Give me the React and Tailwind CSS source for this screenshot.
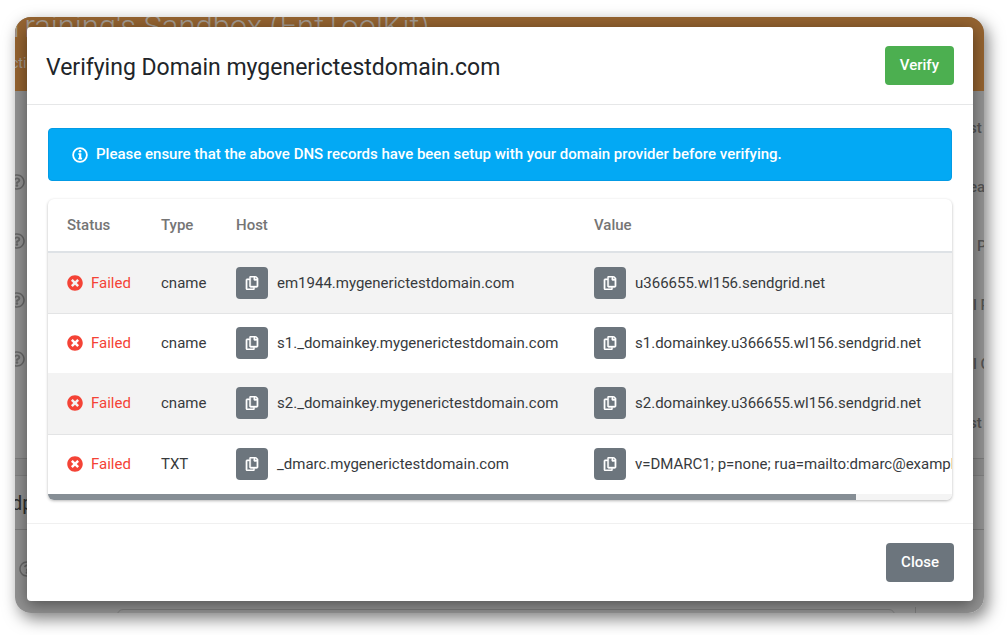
import { useEffect, useRef, useState } from 'react'
import { FaRegCopy, FaRegQuestionCircle, FaTimesCircle } from 'react-icons/fa'

const records = [
  { type: 'cname', host: 'em1944.mygenerictestdomain.com', value: 'u366655.wl156.sendgrid.net' },
  { type: 'cname', host: 's1._domainkey.mygenerictestdomain.com', value: 's1.domainkey.u366655.wl156.sendgrid.net' },
  { type: 'cname', host: 's2._domainkey.mygenerictestdomain.com', value: 's2.domainkey.u366655.wl156.sendgrid.net' },
  { type: 'TXT', host: '_dmarc.mygenerictestdomain.com', value: 'v=DMARC1; p=none; rua=mailto:dmarc@example.com' },
]

const settings = [
  { label: 'st', help: false },
  { label: 'eat', help: true },
  { label: 'P', help: true, indent: 'pl-2' },
  { label: 'l R', help: true, indent: 'pl-1' },
  { label: 'l C', help: true, indent: 'pl-1' },
  { label: 'st', help: false },
]

const InfoIcon = () => (
  <svg viewBox="0 0 512 512" className="w-4 h-4 shrink-0" fill="currentColor" aria-hidden="true">
    <circle cx="256" cy="256" r="220" fill="none" stroke="currentColor" strokeWidth="58" />
    <path d="M212 346h14V250h-14c-6 0-12-5-12-12v-30c0-7 6-12 12-12h74c7 0 12 5 12 12v138h14c7 0 12 5 12 12v28c0 7-5 12-12 12h-100c-6 0-12-5-12-12v-28c0-7 6-12 12-12z" />
    <circle cx="258" cy="136" r="40" />
  </svg>
)

const CopyCell = ({ text }) => (
  <div className="flex items-center gap-[9px]">
    <button
      type="button"
      aria-label={`Copy ${text}`}
      onClick={() => navigator.clipboard?.writeText(text)}
      className="flex w-8 h-8 shrink-0 items-center justify-center rounded bg-[#6c757d] text-white hover:bg-[#5a6268]"
    >
      <FaRegCopy className="w-[14px] h-[14px] stroke-current stroke-[16px]" />
    </button>
    <span>{text}</span>
  </div>
)

// Dimmed settings page behind the dialog
const PageBehind = () => (
  <div className="absolute inset-0 flex flex-col bg-[#929292]" aria-hidden="true">
    <div className="h-[74px] shrink-0 bg-[#946330] text-[#a39a90]">
      <p className="-mt-2 -ml-2 text-[31px] leading-9 font-light whitespace-nowrap">Training's Sandbox (EntToolKit)</p>
      <p className="mt-2 -ml-1 text-sm">cti</p>
    </div>
    <div className="h-[368px] shrink-0 border-b border-[#7c7c7c] pt-2">
      {settings.map((row, i) => (
        <div key={i} className="flex h-[59px] items-center justify-between text-[#545454]">
          <span className="-ml-[6px] pb-3">
            {row.help && <FaRegQuestionCircle className="w-4 h-4 text-[#666666]" />}
          </span>
          <span className={`w-[15px] text-[15px] font-medium whitespace-nowrap ${row.indent || ''}`}>
            {row.label}
          </span>
        </div>
      ))}
    </div>
    <div className="h-[17px] shrink-0 border-b border-[#808080] bg-[#8c8c8c]" />
    <div className="flex h-[54px] shrink-0 items-center border-b border-[#7c7c7c]">
      <span className="-ml-1 text-xl text-[#2e2e2e]">dp</span>
    </div>
    <div className="flex h-[77px] shrink-0 items-center pl-1">
      <FaRegQuestionCircle className="w-4 h-4 text-[#666666]" />
    </div>
    <div className="mr-[68px] flex-1 border-r border-[#7c7c7c] pl-[102px] pr-5">
      <div className="mt-[2px] h-5 rounded-md border border-[#7c7c7c]" />
    </div>
  </div>
)

const RecordsTable = () => {
  const scroller = useRef(null)
  const [thumb, setThumb] = useState({ width: 100, left: 0 })

  const updateThumb = () => {
    const el = scroller.current
    setThumb({
      width: (el.clientWidth / el.scrollWidth) * 100,
      left: (el.scrollLeft / el.scrollWidth) * 100,
    })
  }

  useEffect(() => {
    updateThumb()
    window.addEventListener('resize', updateThumb)
    return () => window.removeEventListener('resize', updateThumb)
  }, [])

  return (
    <div className="overflow-hidden rounded-md shadow-[0_1px_3px_rgba(0,0,0,0.28)]">
      <div ref={scroller} onScroll={updateThumb} className="overflow-x-auto [scrollbar-width:none]">
        <table className="w-full min-w-[1011px] table-fixed border-collapse text-left whitespace-nowrap">
          <thead>
            <tr className="h-[53px] border-b-2 border-[#dee2e6] text-[#757575]">
              <th className="w-[113px] pl-[19px] font-medium">Status</th>
              <th className="w-[75px] font-medium">Type</th>
              <th className="w-[358px] font-medium">Host</th>
              <th className="font-medium">Value</th>
            </tr>
          </thead>
          <tbody>
            {records.map((record) => (
              <tr key={record.host} className="h-[60px] border-[#e3e4e5] odd:h-[61px] odd:border-b odd:bg-[#f3f3f3]">
                <td className="pl-[19px] text-[#f44336]">
                  <span className="flex items-center gap-2">
                    <FaTimesCircle className="w-4 h-4" />
                    Failed
                  </span>
                </td>
                <td>{record.type}</td>
                <td>
                  <CopyCell text={record.host} />
                </td>
                <td>
                  <CopyCell text={record.value} />
                </td>
              </tr>
            ))}
          </tbody>
        </table>
      </div>
      <div className="h-[6px] bg-[#f4f4f4]">
        <div className="h-full bg-[#868e95]" style={{ width: `${thumb.width}%`, marginLeft: `${thumb.left}%` }} />
      </div>
    </div>
  )
}

const App = () => {
  const [open, setOpen] = useState(true)

  return (
    <div className="min-h-screen bg-white pt-[17px] pr-6 pb-[22px] pl-[15px] font-[Roboto,sans-serif] text-[15px] text-[#373a3d]">
      <div className="relative overflow-hidden rounded-2xl pt-[10px] pr-[11px] pb-3 pl-3 shadow-[4px_6px_16px_rgba(0,0,0,0.5)]">
        <PageBehind />

        {open && (
          <div role="dialog" aria-labelledby="dialog-title" className="relative rounded bg-white shadow-[0_4px_16px_rgba(0,0,0,0.45)]">
            <div className="flex items-end justify-between border-b border-[#e6e7e8] p-[19px]">
              <h1 id="dialog-title" className="text-[23px] leading-[34px] text-[#212529]">Verifying Domain mygenerictestdomain.com</h1>
              <button type="button" className="h-[39px] rounded bg-[#4caf50] px-[15px] font-medium text-white hover:bg-[#43a047]">
                Verify
              </button>
            </div>

            <div className="flex flex-col gap-[18px] px-[21px] py-[23px]">
              <div role="alert" className="flex h-[53px] items-center gap-2 rounded border border-[#039be5] bg-[#03a9f4] px-[23px] font-medium text-white">
                <InfoIcon />
                Please ensure that the above DNS records have been setup with your domain provider before verifying.
              </div>
              <RecordsTable />
            </div>

            <div className="flex justify-end border-t border-[#f0f0f0] p-[19px]">
              <button
                type="button"
                onClick={() => setOpen(false)}
                className="h-[39px] rounded bg-[#6c757d] px-[15px] font-medium text-white hover:bg-[#5a6268]"
              >
                Close
              </button>
            </div>
          </div>
        )}
      </div>
    </div>
  )
}

export default App
